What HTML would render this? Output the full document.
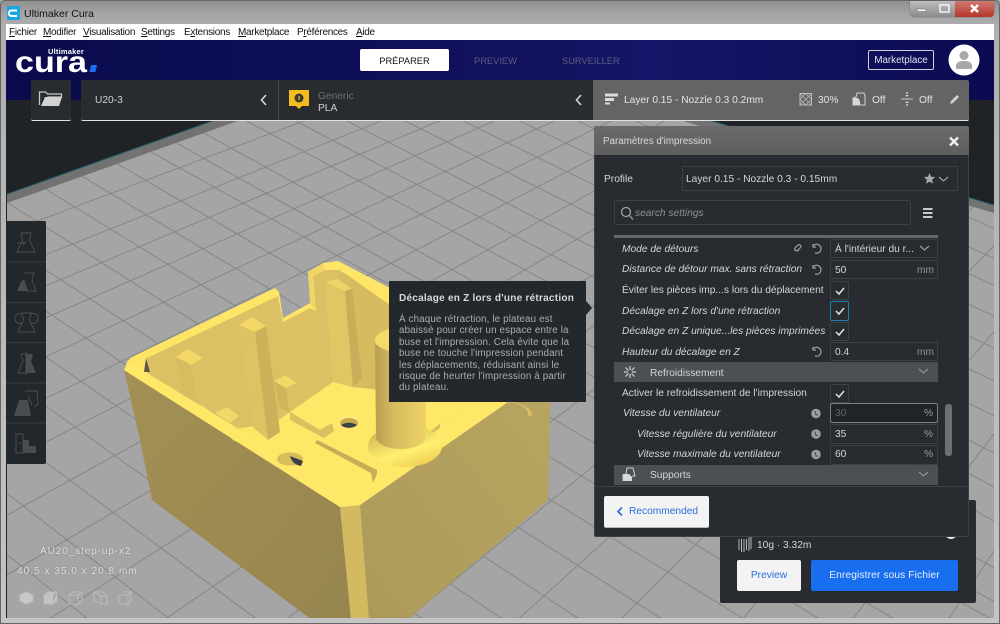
<!DOCTYPE html>
<html lang="fr"><head><meta charset="utf-8"><title>Ultimaker Cura</title>
<style>
html{margin:0;padding:0;background:#a8a8a8;width:1000px;height:624px;overflow:hidden}
body{margin:0;padding:0;width:1000px;height:624px;position:relative;overflow:hidden;font-family:"Liberation Sans","DejaVu Sans",sans-serif;font-size:10.2px;color:#d4d6d8}
.a{position:absolute}
.t{position:absolute;white-space:nowrap;line-height:14px;margin-top:1px}
.i{font-style:italic}
.n{font-size:9.3px}
.box{position:absolute;box-sizing:border-box;border:1px solid #3c4145;border-radius:2px}
.chk{position:absolute;box-sizing:border-box;border:1px solid #3c4145;border-radius:2px;left:830px;width:19px;height:19px}
svg{position:absolute;left:0;top:0}
.m{position:absolute;top:25px;line-height:15px;color:#111;font-size:10px;letter-spacing:-.3px;white-space:nowrap;font-family:"Liberation Sans",sans-serif}
.m u{text-decoration:underline}
</style></head><body>

<!-- window frame -->
<div class="a" style="left:0;top:0;width:1000px;height:624px;background:linear-gradient(180deg,#919191 0,#a6a6a6 14px,#b0b0b0 30px,#c4c4c4 100%);border-radius:5px 5px 0 0;box-sizing:border-box;border:1px solid #666"></div>
<svg width="1000" height="40"><path d="M7 6h13v14H7z" fill="#19a6e0"/><path d="M17 10.500h-5.500a2.500 2.500 0 0 0 0 5.500H17" fill="none" stroke="#fff" stroke-width="2"/>
<text x="24" y="17" font-family="Liberation Sans,sans-serif" font-size="10.500" fill="#111">Ultimaker Cura</text></svg>
<div class="a" style="left:910px;top:1px;width:84px;height:16px;border-radius:0 0 4px 4px;background:linear-gradient(#bdbdbd,#8b8b8b);box-shadow:0 0 1px #444"></div>
<div class="a" style="left:955px;top:1px;width:39px;height:16px;border-radius:0 0 4px 0;background:linear-gradient(#cf7a70,#b7362a)"></div>
<svg width="1000" height="20"><rect x="917" y="9" width="9" height="2.500" fill="#f4f4f4" stroke="#666" stroke-width=".5"/><rect x="940" y="5" width="9" height="7" fill="none" stroke="#f4f4f4" stroke-width="1.500"/><path d="M971 5l7 7M978 5l-7 7" stroke="#fff" stroke-width="2.500"/></svg>

<!-- menu -->
<div class="a" style="left:6px;top:24px;width:988px;height:16px;background:#fff"></div>
<span class="m" style="left:9px"><u>F</u>ichier</span>
<span class="m" style="left:43px"><u>M</u>odifier</span>
<span class="m" style="left:83px"><u>V</u>isualisation</span>
<span class="m" style="left:141px"><u>S</u>ettings</span>
<span class="m" style="left:184px">E<u>x</u>tensions</span>
<span class="m" style="left:238px"><u>M</u>arketplace</span>
<span class="m" style="left:297px">P<u>r</u>éférences</span>
<span class="m" style="left:356px"><u>A</u>ide</span>

<!-- viewport -->
<div class="a" style="left:6px;top:40px;width:988px;height:578px;overflow:hidden;background:#1f2326">
<svg width="1000" height="624" viewBox="0 0 1000 624" style="left:-6px;top:-40px">
<defs>
<linearGradient id="lf" x1="0" y1="0" x2="1" y2="1"><stop offset="0" stop-color="#a39055"/><stop offset="1" stop-color="#97854f"/></linearGradient>
<linearGradient id="rf" x1="0" y1="1" x2="1" y2="0"><stop offset="0" stop-color="#ac9a5b"/><stop offset="1" stop-color="#b8a560"/></linearGradient>
<linearGradient id="cy" x1="0" y1="0" x2="1" y2="0"><stop offset="0" stop-color="#b89f52"/><stop offset=".4" stop-color="#d8bd60"/><stop offset="1" stop-color="#efd266"/></linearGradient>
<linearGradient id="cone" x1="0" y1="0" x2=".6" y2="1"><stop offset="0" stop-color="#c4a548"/><stop offset=".7" stop-color="#fff06e"/><stop offset="1" stop-color="#f2d25a"/></linearGradient>
</defs>
<polygon points="7,194 440,40 994,205 994,624 7,624" fill="#727272"/>
<polygon points="7,203 440,49 994,213 994,624 7,624" fill="#a5a5a5"/>
<polyline points="7,194 440,40 994,205" fill="none" stroke="#1f5a6a" stroke-width="1"/>
<clipPath id="bed"><polygon points="7,203 440,49 994,213 994,624 7,624"/></clipPath>
<g clip-path="url(#bed)" fill="none" stroke="#868686" stroke-width="1">
<path d="M1000-140L0 235M1000-126L0 273M1000-114L0 305M1000-101L0 338M1000-86L0 378M1000-70L0 421M1000-53L0 466M1000-33L0 519M1000-10L0 579M1000 17L41 624M1000 48L158 624M1000 86L280 624M1000 132L401 624M1000 183L513 624M1000 240L616 624M1000 325L738 624M1000 426L849 624M1000 542L945 624"/>
<path d="M0-209L1000 231M0-189L1000 261M0-171L1000 288M0-150L1000 319M0-128L1000 351M0-106L1000 384M0-82L1000 419M0-57L1000 456M0-34L1000 490M0-11L1000 524M0 21L1000 571M0 44L1000 605M0 68L1000 624M0 95L903 624M0 127L828 624M0 161L752 624M0 198L670 624M0 240L587 624M0 280L510 624M0 325L430 624M0 373L349 624M0 428L263 624M0 488L176 624M0 549L94 624M0 616L9 624"/>
</g>

<!-- model -->
<polygon points="124,370 140,440 152,500 312,620 351,620 340,507" fill="url(#lf)"/>
<polygon points="360,505 369,620 407,620 548,500 551,372" fill="url(#rf)"/>
<polygon points="340,507 360,505 369,620 351,620" fill="#d3b95f"/>
<polygon points="124,370 130,358 275,288 279,292 283,318 310,303 315,307 308,272 323,263 338,261 551,372 360,505 340,507" fill="#ffe565"/>
<!-- back left wall -->
<polygon points="147,358 278,296 283,322 310,308 316,311 313,276 325,270 340,270 345,383 290,420 230,430 147,373" fill="#dcc064"/>
<polygon points="308,272 323,263 325,270 313,276 316,311 310,303" fill="#f1d566"/>
<!-- back right wall -->
<polygon points="338,270 395,298 440,340 440,440 360,395 345,383" fill="#d7bb60"/>
<polygon points="338,261 420,312 400,312 340,270" fill="#ffe565"/>
<!-- floor -->
<polygon points="200,404 250,440 290,412 333,382 353,387 470,400 360,487 342,492 233,440" fill="#ffe868"/>
<!-- near rim -->
<polygon points="147,373 342,492 360,487 475,402 500,395 551,372 360,505 340,507 124,370 128,360" fill="#ffe768"/>
<!-- grooves -->
<polygon points="290,412 320,430 332,423 334,431 324,438 290,420" fill="#dcbf5e"/>
<polygon points="317,440 377,470 377,474 373,483 371,473 315,443" fill="#c9ad55"/>
<!-- column -->
<polygon points="325,282 338,279 352,289 345,291" fill="#f0d366"/>
<polygon points="325,282 345,291 353,387 333,382" fill="#e2c663"/>
<polygon points="345,291 352,289 362,378 353,387" fill="#c8ae59"/>
<!-- rib 1 -->
<polygon points="176,357 188,349 203,358 191,365" fill="#f4d867"/>
<polygon points="176,357 191,365 197,403 183,395" fill="#d8bd60"/>
<!-- rib 2 -->
<polygon points="239,325 252,317 266,326 255,332" fill="#f4d867"/>
<polygon points="239,325 255,332 268,440 253,427" fill="#dec263"/>
<polygon points="255,332 266,326 280,432 268,440" fill="#ccb15b"/>
<!-- rib 3 -->
<polygon points="274,381 285,375 297,383 286,388" fill="#f4d867"/>
<polygon points="274,381 286,388 289,412 280,408" fill="#d0b55d"/>
<!-- step -->
<polygon points="215,413 227,407 239,416 230,423" fill="#f4d867"/>
<polygon points="146,358 150,372 144,372" fill="#5c5845"/>
<!-- holes -->
<ellipse cx="349" cy="422" rx="10.500" ry="6" fill="#ffe97a"/><ellipse cx="349" cy="423" rx="9" ry="5" fill="#c7aa50"/><path d="M341 425a9 5 0 0 0 16 0c-5-3-11-3-16 0z" fill="#3b4046"/>
<ellipse cx="290" cy="459" rx="13" ry="6.500" fill="#d8bc5a"/><path d="M290 456l13 5 -2 5c-6-1-9-4-11-10z" fill="#3b4046"/>
<!-- cone & cylinder -->
<ellipse cx="405" cy="446" rx="37" ry="21" fill="url(#cone)"/>
<path d="M375 345H426V437a25 12 0 0 1-50 0z" fill="url(#cy)"/>
<ellipse cx="400" cy="340" rx="25" ry="12" fill="#f6da69"/>
<path d="M508 402a24 14 0 0 1 24 13l-4 2a20 12 0 0 0-24-14z" fill="#dcc062"/>
</svg>
</div>

<!-- header -->
<div class="a" style="left:6px;top:40px;width:988px;height:60px;background:linear-gradient(90deg,#0a0a4c 0,#12125f 55%,#16166a 65%,#0b0a50 100%)"></div>
<svg width="1000" height="110">
<text x="66" y="54" text-anchor="middle" font-family="Liberation Sans,sans-serif" font-weight="bold" font-size="7.500" fill="#fff" letter-spacing=".2">Ultimaker</text>
<text x="15" y="72" font-family="Liberation Sans,sans-serif" font-weight="bold" font-size="30" fill="#fff" textLength="72" lengthAdjust="spacingAndGlyphs">cura</text>
<path d="M91 65h6l-1.500 7h-6z" fill="#196ef0"/>
</svg>
<div class="a" style="left:360px;top:49px;width:89px;height:22px;background:#fff;border-radius:2px"></div>
<span class="t n" style="left:360px;width:89px;text-align:center;top:53px;color:#111">PRÉPARER</span>
<span class="t n" style="left:474px;top:53px;color:#5c5d7e">PREVIEW</span>
<span class="t n" style="left:562px;top:53px;color:#5c5d7e">SURVEILLER</span>
<div class="a" style="left:868px;top:50px;width:66px;height:20px;box-sizing:border-box;border:1px solid #cfd0dc;border-radius:2px"></div>
<span class="t" style="left:868px;width:66px;text-align:center;top:53px;color:#e4e4ec;font-size:9.800px">Marketplace</span>
<svg width="1000" height="100"><circle cx="964" cy="60" r="15.500" fill="#fff"/><circle cx="964" cy="55.500" r="4.500" fill="#a8a8a8"/><path d="M956 69v-3c0-3.500 3-5 8-5s8 1.500 8 5v3z" fill="#a8a8a8"/></svg>

<!-- toolbar -->
<div class="a" style="left:31px;top:80px;width:40px;height:41px;background:#282c2f;border-bottom:1px solid #e2e2e2;box-sizing:border-box;border-radius:2px"></div>
<svg width="80" height="120"><path d="M39.500 105V92h6l2 2h14v3H48l-5 8" fill="none" stroke="#c6c6c6" stroke-width="1.300"/><path d="M45 97h17l-3 9H41z" fill="#d2d2d2"/></svg>
<div class="a" style="left:81px;top:80px;width:512px;height:41px;background:#282c2f;border-bottom:1px solid #e2e2e2;box-sizing:border-box;border-radius:2px 0 0 2px"></div>
<div class="a" style="left:278px;top:80px;width:1px;height:40px;background:#43474a"></div>
<span class="t" style="left:95px;top:93px;color:#d0d2d4">U20-3</span>
<svg width="1000" height="125">
<path d="M266 95l-4.500 5 4.500 5M581 95l-4.500 5 4.500 5" fill="none" stroke="#d4d4d4" stroke-width="1.600"/>
<path d="M289 90h20v16h-7l-3 3-3-3h-7z" fill="#f3bd1f"/><circle cx="299" cy="98" r="4.500" fill="#3a3a30"/><rect x="298.500" y="96" width="1.200" height="4" fill="#f3bd1f"/>
</svg>
<span class="t" style="left:318px;top:89px;color:#6c7073">Generic</span>
<span class="t" style="left:318px;top:101px;color:#d0d2d4">PLA</span>
<div class="a" style="left:593px;top:80px;width:376px;height:41px;background:#646464;border-bottom:1px solid #e2e2e2;box-sizing:border-box;border-radius:0 2px 2px 0"></div>
<svg width="1000" height="125">
<path d="M605 93.500h13v3h-13zM605 98h9v3h-9zM605 102.500h5v2h-5z" fill="#dcdcdc"/>
<rect x="800" y="93.500" width="11.500" height="11.500" fill="none" stroke="#bdbdbd" stroke-width="1"/><path d="M800 93.500l11.500 11.500M811.500 93.500L800 105M805.700 93.500l5.800 5.800-5.800 5.700-5.700-5.700z" stroke="#bdbdbd" stroke-width=".7" fill="none"/>
<path d="M853 105v-7l3-1 1-4h7l1 3v9z" fill="none" stroke="#d4d4d4" stroke-width="1"/><path d="M853 98h5l2 3v4h-7z" fill="#d8d8d8"/>
<path d="M901 99h12" stroke="#c8c8c8" stroke-width="1"/><path d="M907 92v2M907 104v2" stroke="#c8c8c8" stroke-width="1.500"/><path d="M905 95h4l-2 2zM905 103h4l-2-2z" fill="#c8c8c8"/>
<path d="M950 104l1-3 6-6 2 2-6 6z" fill="#d0d0d0"/>
</svg>
<span class="t" style="left:624px;top:93px;color:#e4e4e4">Layer 0.15 - Nozzle 0.3 0.2mm</span>
<span class="t" style="left:818px;top:93px;color:#e4e4e4">30%</span>
<span class="t" style="left:872px;top:93px;color:#e4e4e4">Off</span>
<span class="t" style="left:919px;top:93px;color:#e4e4e4">Off</span>

<!-- left toolbar -->
<div class="a" style="left:6px;top:221px;width:40px;height:243px;background:#22272c;border-radius:0 2px 2px 0"></div>
<svg width="60" height="480">
<path d="M6 262h40M6 302.500h40M6 342.500h40M6 383h40M6 423h40" stroke="#373c40"/>
<g fill="none" stroke="#484d51" stroke-width="1">
<path d="M21 233h10l-1.500 7 5.500 12H17l5.500-12z"/><path d="M17 243h9"/>
<path d="M24 273h10l-2 7 4 11h-10"/>
<path d="M22 313h9l-1.500 7 5.500 12H18l5.500-12zM22 314a5 5 0 1 0 0 9M31 314a5 5 0 1 1 0 9"/>
<path d="M26 351v24M26 354h-5l2 7-5 12h8"/>
<path d="M16 434h7v19h-7zM19 443h2"/>
<path d="M25 391h12l1 13-4 3M28 396l4 9"/>
</g>
<g fill="#484d51">
<path d="M24 279l4 12H17l4-9z"/><path d="M26 354h7l-2 7 5 12h-10z"/><path d="M19 400h9l3 16H14z"/><path d="M23 440h6v6h7v7H23z"/>
</g>
<path d="M26 243l-3-2v4z" fill="#484d51"/>
</svg>

<!-- info bottom left -->
<span class="t" style="left:40px;top:544px;color:#dcdcdc;letter-spacing:.8px;text-shadow:0 0 2px #888">AU20_step-up-x2</span>
<span class="t" style="left:17px;top:564px;color:#dcdcdc;letter-spacing:.95px;text-shadow:0 0 2px #888">40.5 x 35.0 x 20.8 mm</span>
<svg width="150" height="624">
<g fill="none" stroke="#bcbcbc" stroke-width="1">
<path d="M20 595l6.500-3 6.500 3v6l-6.500 3-6.500-3z" fill="#c8c8c8"/>
<path d="M44 595h9v9h-9zM53 595l4-3h-9l-4 3M53 604l4-3v-9" fill="#c4c4c4"/>
<path d="M69 595h9v9h-9zM78 595l4-3h-9l-4 3M78 604l4-3v-9"/>
<path d="M94 592l7 4v8l-7-4zM101 596h6v8h-6M94 592h9l4 4"/>
<path d="M119 595h9v9h-9zM128 595l3-3h-8M128 604l3-3v-9"/>
</g></svg>

<!-- print action panel -->
<div class="a" style="left:720px;top:500px;width:256px;height:103px;background:#282c30;border-radius:2px"></div>
<svg width="1000" height="624"><circle cx="951" cy="533" r="6" fill="#e8e8e8"/><path d="M739 539v11M741.500 539v13M744 539v13M746.500 539v11M749 537v14M751 537v12" stroke="#b6b6b6" stroke-width="1" fill="none"/></svg>
<span class="t" style="left:757px;top:538px;color:#d4d6d8">10g · 3.32m</span>
<div class="a" style="left:737px;top:560px;width:64px;height:31px;background:#f3f3f3;border-radius:2px"></div>
<span class="t" style="left:737px;width:64px;text-align:center;top:568px;color:#2a6fdc">Preview</span>
<div class="a" style="left:811px;top:560px;width:147px;height:31px;background:#196ef0;border-radius:2px"></div>
<span class="t" style="left:811px;width:147px;text-align:center;top:568px;color:#e8eefc;letter-spacing:.12px">Enregistrer sous Fichier</span>

<!-- settings panel -->
<div class="a" style="left:594px;top:126px;width:375px;height:411px;background:#282c30;box-sizing:border-box;border:1px solid #3c4145;border-radius:2px"></div>
<div class="a" style="left:594px;top:126px;width:375px;height:29px;background:linear-gradient(#6a6a6a,#5e5e5e);border-radius:2px 2px 0 0"></div>
<span class="t" style="left:603px;top:134px;color:#dadada;font-size:9.800px">Paramètres d'impression</span>
<svg width="1000" height="160"><path d="M950 137.500l8 8M958 137.500l-8 8" stroke="#f0f0f0" stroke-width="2.400"/></svg>
<span class="t" style="left:604px;top:172px">Profile</span>
<div class="box" style="left:682px;top:166px;width:276px;height:25px"></div>
<span class="t" style="left:686px;top:172px">Layer 0.15 - Nozzle 0.3 - 0.15mm</span>
<svg width="1000" height="230">
<path d="M929.500 173l1.600 3.700 4 .3-3 2.700.9 4-3.500-2.100-3.500 2.100.9-4-3-2.700 4-.3z" fill="#a8a8a8"/>
<path d="M939 177l4.500 4 4.500-4" fill="none" stroke="#9a9ea0" stroke-width="1.200"/>
<circle cx="626" cy="212" r="4.500" fill="none" stroke="#a4a8aa" stroke-width="1.200"/><path d="M629.500 215.500l3.500 4" stroke="#a4a8aa" stroke-width="1.200"/>
<path d="M923 209h9.500M923 213h9.500M923 217h9.500" stroke="#e0e0e0" stroke-width="1.700"/>
</svg>
<div class="box" style="left:614px;top:200px;width:297px;height:25px"></div>
<span class="t i" style="left:635px;top:206px;color:#8c9094">search settings</span>
<div class="a" style="left:614px;top:235px;width:324px;height:3px;background:#63676a"></div>

<!-- rows -->
<span class="t i" style="left:622px;top:242px">Mode de détours</span>
<span class="t i" style="left:622px;top:262px">Distance de détour max. sans rétraction</span>
<span class="t" style="left:622px;top:283px">Éviter les pièces imp...s lors du déplacement</span>
<span class="t i" style="left:622px;top:304px">Décalage en Z lors d'une rétraction</span>
<span class="t i" style="left:622px;top:324px">Décalage en Z unique...les pièces imprimées</span>
<span class="t i" style="left:622px;top:345px">Hauteur du décalage en Z</span>

<div class="box" style="left:830px;top:239px;width:108px;height:19px"></div>
<span class="t" style="left:835px;top:242px">À l'intérieur du r...</span>
<div class="box" style="left:830px;top:260px;width:108px;height:19px"></div>
<span class="t" style="left:835px;top:263px">50</span><span class="t" style="left:917px;top:263px;color:#8f9396">mm</span>
<div class="chk" style="top:281px"><svg width="12" height="12" style="left:3px;top:3px"><path d="M2 6l3 3 5-6" fill="none" stroke="#e4e4e4" stroke-width="1.500"/></svg></div>
<div class="chk" style="top:301px;border:1px solid #1e7fb0;height:20px"><svg width="12" height="12" style="left:3px;top:3px"><path d="M2 6l3 3 5-6" fill="none" stroke="#e4e4e4" stroke-width="1.500"/></svg></div>
<div class="chk" style="top:322px"><svg width="12" height="12" style="left:3px;top:3px"><path d="M2 6l3 3 5-6" fill="none" stroke="#e4e4e4" stroke-width="1.500"/></svg></div>
<div class="box" style="left:830px;top:342px;width:108px;height:19px"></div>
<span class="t" style="left:835px;top:345px">0.4</span><span class="t" style="left:917px;top:345px;color:#8f9396">mm</span>

<svg width="1000" height="624">
<g fill="none" stroke="#9c9ea0" stroke-width="1.200">
<path d="M795 248l3-3a1.800 1.800 0 0 1 2.500 2.500l-3 3a1.800 1.800 0 0 1-2.500-2.500z"/>
<path d="M799 250.500l-2.500 0"/>
<path d="M813 246a4.500 4.500 0 1 1 2 7M813 244v3h3"/>
<path d="M813 267a4.500 4.500 0 1 1 2 7M813 265v3h3"/>
<path d="M813 349a4.500 4.500 0 1 1 2 7M813 347v3h3"/>
<path d="M920 246l4.500 4 4.500-4"/>
</g>
</svg>

<div class="a" style="left:614px;width:324px;top:362px;height:20px;background:#4b5054"></div>
<span class="t" style="left:650px;top:366px">Refroidissement</span>
<svg width="1000" height="624">
<g stroke="#d0d0d0" stroke-width="1.200" fill="none"><path d="M630 366v4M630 378v-4M624 372h4M636 372h-4M625.500 367.500l3 3M634.500 376.500l-3-3M634.500 367.500l-3 3M625.500 376.500l3-3"/></g>
<path d="M919 369l4.500 4 4.500-4" fill="none" stroke="#8e9294" stroke-width="1.200"/>
</svg>

<span class="t" style="left:622px;top:386px">Activer le refroidissement de l'impression</span>
<div class="chk" style="top:384px"><svg width="12" height="12" style="left:3px;top:3px"><path d="M2 6l3 3 5-6" fill="none" stroke="#e4e4e4" stroke-width="1.500"/></svg></div>

<span class="t i" style="left:623px;top:406px">Vitesse du ventilateur</span>
<span class="t i" style="left:637px;top:427px">Vitesse régulière du ventilateur</span>
<span class="t i" style="left:637px;top:447px">Vitesse maximale du ventilateur</span>
<svg width="1000" height="624"><g fill="#9a9c9e"><circle cx="816" cy="413.500" r="4.800"/><circle cx="816" cy="434" r="4.800"/><circle cx="816" cy="454.500" r="4.800"/></g>
<g fill="none" stroke="#4a4d50" stroke-width="1"><path d="M815 411l1 4 2 0M815 431.500l1 4 2 0M815 452l1 4 2 0"/></g></svg>
<div class="box" style="left:830px;top:403px;width:108px;height:20px;background:#202427;border-color:#7c8083"></div>
<span class="t" style="left:835px;top:406px;color:#5e6265">30</span><span class="t" style="left:924px;top:406px;color:#9a9c9e">%</span>
<div class="box" style="left:830px;top:424px;width:108px;height:20px"></div>
<span class="t" style="left:835px;top:427px">35</span><span class="t" style="left:924px;top:427px;color:#9a9c9e">%</span>
<div class="box" style="left:830px;top:445px;width:108px;height:20px"></div>
<span class="t" style="left:835px;top:447px">60</span><span class="t" style="left:924px;top:447px;color:#9a9c9e">%</span>
<div class="a" style="left:945px;top:404px;width:7px;height:52px;background:#6c7072;border-radius:3px"></div>

<div class="a" style="left:614px;width:324px;top:465px;height:20px;background:#4b5054"></div>
<span class="t" style="left:650px;top:468px">Supports</span>
<svg width="1000" height="624"><path d="M623 481v-6l3-1 1-6h6l2 8h-3" fill="none" stroke="#d0d0d0"/><path d="M623 474h6l3 3v4h-9z" fill="#d8d8d8"/><path d="M919 472l4.500 4 4.500-4" fill="none" stroke="#8e9294" stroke-width="1.200"/></svg>

<div class="a" style="left:595px;top:486px;width:373px;height:50px;background:#282c30;border-top:1px solid #3c4145;box-sizing:border-box"></div>
<div class="a" style="left:604px;top:496px;width:105px;height:31px;background:#f3f3f3;border-radius:2px;box-shadow:0 1px 0 #bbb"></div>
<svg width="1000" height="624"><path d="M622 507.500l-4 4 4 4" fill="none" stroke="#2a6fdc" stroke-width="1.700"/></svg>
<span class="t" style="left:629px;top:504px;color:#2a6fdc">Recommended</span>

<!-- tooltip -->
<div class="a" style="left:389px;top:281px;width:197px;height:121px;background:#23282c"></div>
<svg width="1000" height="624"><path d="M586 301l6 7-6 7z" fill="#23282c"/></svg>
<span class="t" style="left:399px;top:291px;color:#d8dadc;font-weight:bold;letter-spacing:.25px;font-size:10px">Décalage en Z lors d'une rétraction</span>
<div class="a" style="left:399px;top:314px;width:180px;color:#a8aeb2;font-size:9.800px;line-height:11.400px;white-space:nowrap;letter-spacing:.14px">À chaque rétraction, le plateau est<br>abaissé pour créer un espace entre la<br>buse et l'impression. Cela évite que la<br>buse ne touche l'impression pendant<br>les déplacements, réduisant ainsi le<br>risque de heurter l'impression à partir<br>du plateau.</div>

</body></html>
